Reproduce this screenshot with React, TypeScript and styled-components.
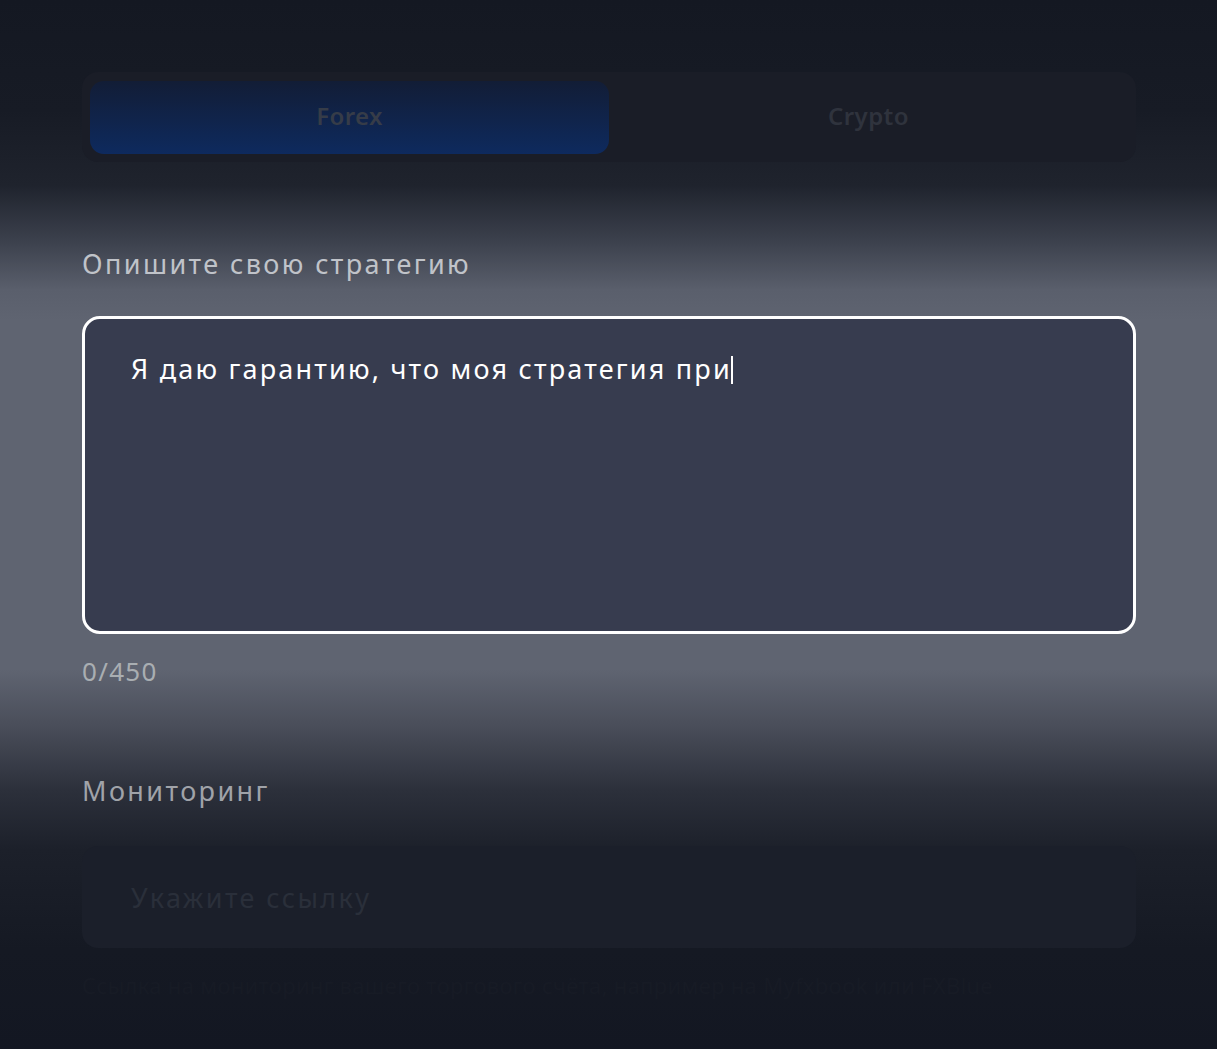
import React, { useState } from 'react'
import styled, { createGlobalStyle } from 'styled-components'

const GlobalStyle = createGlobalStyle`
  html, body {
    margin: 0;
    padding: 0;
    background: #131722;
  }
  body {
    font-family: 'Noto Sans', 'Open Sans', sans-serif;
    -webkit-font-smoothing: antialiased;
  }
`

// Page with the light band behind the focused field
const Page = styled.div`
  min-height: 1049px;
  box-sizing: border-box;
  padding: 72px 81px 0 82px;
  background: linear-gradient(
    to bottom,
    #141822 0px,
    #171b25 110px,
    #1f232d 185px,
    #3b404c 240px,
    #5a5f6c 290px,
    #5f6471 320px,
    #5f6471 670px,
    #4a4e5a 725px,
    #2c303b 790px,
    #1c202a 850px,
    #151923 950px,
    #131722 1049px
  );
`

const Tabs = styled.div`
  display: grid;
  grid-template-columns: 1fr 1fr;
  height: 90px;
  box-sizing: border-box;
  padding: 9px 8px 8px;
  background: #1a1d27;
  border-radius: 16px;
`

const Tab = styled.button<{ $active?: boolean }>`
  border: none;
  border-radius: 14px;
  padding: 0 0 4px;
  font-family: 'Noto Sans', sans-serif;
  font-size: 24px;
  font-weight: 600;
  letter-spacing: 0.4px;
  color: ${({ $active }) => ($active ? '#363c48' : '#2f333d')};
  cursor: pointer;
  background: ${({ $active }) =>
    $active ? 'linear-gradient(to bottom, #121d36, #0e2a5e)' : 'transparent'};
`

const Label = styled.div<{ $color: string; $top: number }>`
  margin-top: ${({ $top }) => $top}px;
  font-size: 27px;
  letter-spacing: 2.4px;
  color: ${({ $color }) => $color};
  line-height: 36px;
`

const FieldWrap = styled.div`
  position: relative;
  margin-top: 34px;
`

const fieldText = `
  box-sizing: border-box;
  padding: 32px 46px;
  border: 3px solid transparent;
  font-family: 'Noto Sans', sans-serif;
  font-size: 27px;
  letter-spacing: 2.2px;
  line-height: 36px;
  white-space: pre-wrap;
  word-wrap: break-word;
`

const TextArea = styled.textarea`
  ${fieldText}
  display: block;
  width: 100%;
  height: 318px;
  margin: 0;
  background: #373c4f;
  border-color: #ffffff;
  border-radius: 18px;
  resize: none;
  outline: none;
  color: #ffffff;
  caret-color: #ffffff;
`

// mirror of the text that only shows where the caret sits
const CaretLayer = styled.div`
  ${fieldText}
  position: absolute;
  inset: 0;
  color: transparent;
  pointer-events: none;
`

const Caret = styled.span`
  display: inline-block;
  width: 2px;
  height: 28px;
  margin-left: -1px;
  vertical-align: -5px;
  background: #ffffff;
`

const Counter = styled.div`
  margin-top: 20px;
  font-size: 26px;
  letter-spacing: 1.3px;
  line-height: 34px;
  color: #a9aeb2;
`

const Input = styled.input`
  display: block;
  width: 100%;
  height: 102px;
  margin-top: 37px;
  box-sizing: border-box;
  padding: 0 49px;
  background: #1b1f2a;
  border: none;
  border-radius: 16px;
  outline: none;
  font-family: 'Noto Sans', sans-serif;
  font-size: 27px;
  letter-spacing: 2.4px;
  color: #c0c3c9;

  &::placeholder {
    color: #2a2f3a;
  }
`

const Hint = styled.div`
  margin-top: 22px;
  font-size: 22px;
  letter-spacing: 0.3px;
  color: #171b25;
  white-space: nowrap;
`

export default function App() {
  const [market, setMarket] = useState('forex')
  const [text, setText] = useState('Я даю гарантию, что моя стратегия при')

  return (
    <>
      <GlobalStyle />
      <Page>
        <Tabs>
          <Tab $active={market === 'forex'} onClick={() => setMarket('forex')}>
            Forex
          </Tab>
          <Tab $active={market === 'crypto'} onClick={() => setMarket('crypto')}>
            Crypto
          </Tab>
        </Tabs>

        <Label $color="#c0c3c9" $top={84}>
          Опишите свою стратегию
        </Label>
        <FieldWrap>
          <TextArea value={text} onChange={(e) => setText(e.target.value)} maxLength={450} />
          <CaretLayer aria-hidden>
            {text}
            <Caret />
          </CaretLayer>
        </FieldWrap>
        <Counter>0/450</Counter>

        <Label $color="#a0a3a9" $top={85}>
          Мониторинг
        </Label>
        <Input placeholder="Укажите ссылку" />
        <Hint>Ссылка на мониторинг вашего торгового счёта, например на Myfxbook или FXBlue</Hint>
      </Page>
    </>
  )
}
